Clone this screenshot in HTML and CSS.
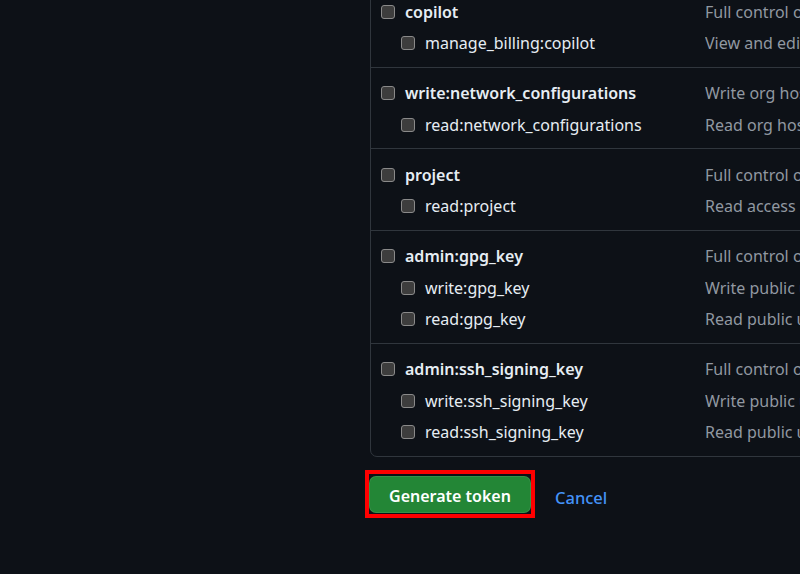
FILE: index.html
```html
<!DOCTYPE html>
<html lang="en">
<head>
<meta charset="utf-8">
<title>Scopes</title>
<link rel="stylesheet" href="styles.css">
</head>
<body>
<div class="page">
  <div class="sidebar"></div>
  <main class="content">
    <div class="scopes">
      <div class="group">
        <div class="row parent"><label class="name"><input type="checkbox"><span>copilot</span></label><span class="desc">Full control of GitHub Copilot settings and seat assignments</span></div>
        <div class="row child"><label class="name"><input type="checkbox"><span>manage_billing:copilot</span></label><span class="desc">View and edit Copilot Business seat assignments</span></div>
      </div>
      <div class="group">
        <div class="row parent"><label class="name"><input type="checkbox"><span>write:network_configurations</span></label><span class="desc">Write org hosted compute network configurations</span></div>
        <div class="row child"><label class="name"><input type="checkbox"><span>read:network_configurations</span></label><span class="desc">Read org hosted compute network configurations</span></div>
      </div>
      <div class="group">
        <div class="row parent"><label class="name"><input type="checkbox"><span>project</span></label><span class="desc">Full control of projects</span></div>
        <div class="row child"><label class="name"><input type="checkbox"><span>read:project</span></label><span class="desc">Read access of projects</span></div>
      </div>
      <div class="group">
        <div class="row parent"><label class="name"><input type="checkbox"><span>admin:gpg_key</span></label><span class="desc">Full control of public user GPG keys</span></div>
        <div class="row child"><label class="name"><input type="checkbox"><span>write:gpg_key</span></label><span class="desc">Write public user GPG keys</span></div>
        <div class="row child"><label class="name"><input type="checkbox"><span>read:gpg_key</span></label><span class="desc">Read public user GPG keys</span></div>
      </div>
      <div class="group">
        <div class="row parent"><label class="name"><input type="checkbox"><span>admin:ssh_signing_key</span></label><span class="desc">Full control of public user SSH signing keys</span></div>
        <div class="row child"><label class="name"><input type="checkbox"><span>write:ssh_signing_key</span></label><span class="desc">Write public user SSH signing keys</span></div>
        <div class="row child"><label class="name"><input type="checkbox"><span>read:ssh_signing_key</span></label><span class="desc">Read public user SSH signing keys</span></div>
      </div>
    </div>
    <div class="actions">
      <div class="highlight"><button class="btn-primary" type="button">Generate token</button></div>
      <a class="cancel" href="#">Cancel</a>
    </div>
  </main>
</div>
</body>
</html>
```

FILE: styles.css
```css
html, body {
  margin: 0;
  padding: 0;
  background: #0d1117;
  overflow: hidden;
  height: 100%;
}
body {
  font-family: "Noto Sans", "Open Sans", sans-serif;
  font-size: 16px;
  color: #e6edf3;
}
.page {
  display: flex;
  width: 1200px;
}
.sidebar {
  width: 370px;
  flex: none;
}
.content {
  flex: 1;
}
.scopes {
  margin-top: -15px;
  border: 1px solid #30363d;
  border-radius: 7px;
}
.group {
  padding: 10px 0 7.5px;
}
.group + .group {
  border-top: 1px solid #30363d;
}
.row {
  display: grid;
  grid-template-columns: 324px 1fr;
  height: 31.5px;
  align-items: center;
  padding-left: 10px;
  white-space: nowrap;
}
.name {
  display: flex;
  align-items: center;
  gap: 10px;
}
.child .name {
  padding-left: 20px;
}
.parent .name span {
  font-weight: 600;
}
.desc {
  color: #9198a1;
  overflow: hidden;
}
input[type="checkbox"] {
  appearance: none;
  -webkit-appearance: none;
  margin: 0;
  width: 14px;
  height: 14px;
  border: 1px solid #8a8a8a;
  border-radius: 3px;
  background: #3d3d3d;
  flex: none;
}
.actions {
  display: flex;
  align-items: center;
  gap: 20px;
  margin-top: 13px;
  margin-left: -5px;
}
.highlight {
  border: 4px solid #ff0000;
  padding: 2px 0 1px;
  display: flex;
}
.btn-primary {
  font-family: inherit;
  font-size: 16px;
  font-weight: 600;
  color: #ffffff;
  background: #238636;
  border: 1px solid rgba(240, 246, 252, 0.1);
  border-radius: 7px;
  width: 162px;
  height: 37px;
  padding: 4px 0 0;
}
.cancel {
  color: #4493f8;
  text-decoration: none;
  font-weight: 500;
  font-size: 16.5px;
  padding-top: 7px;
}
```
